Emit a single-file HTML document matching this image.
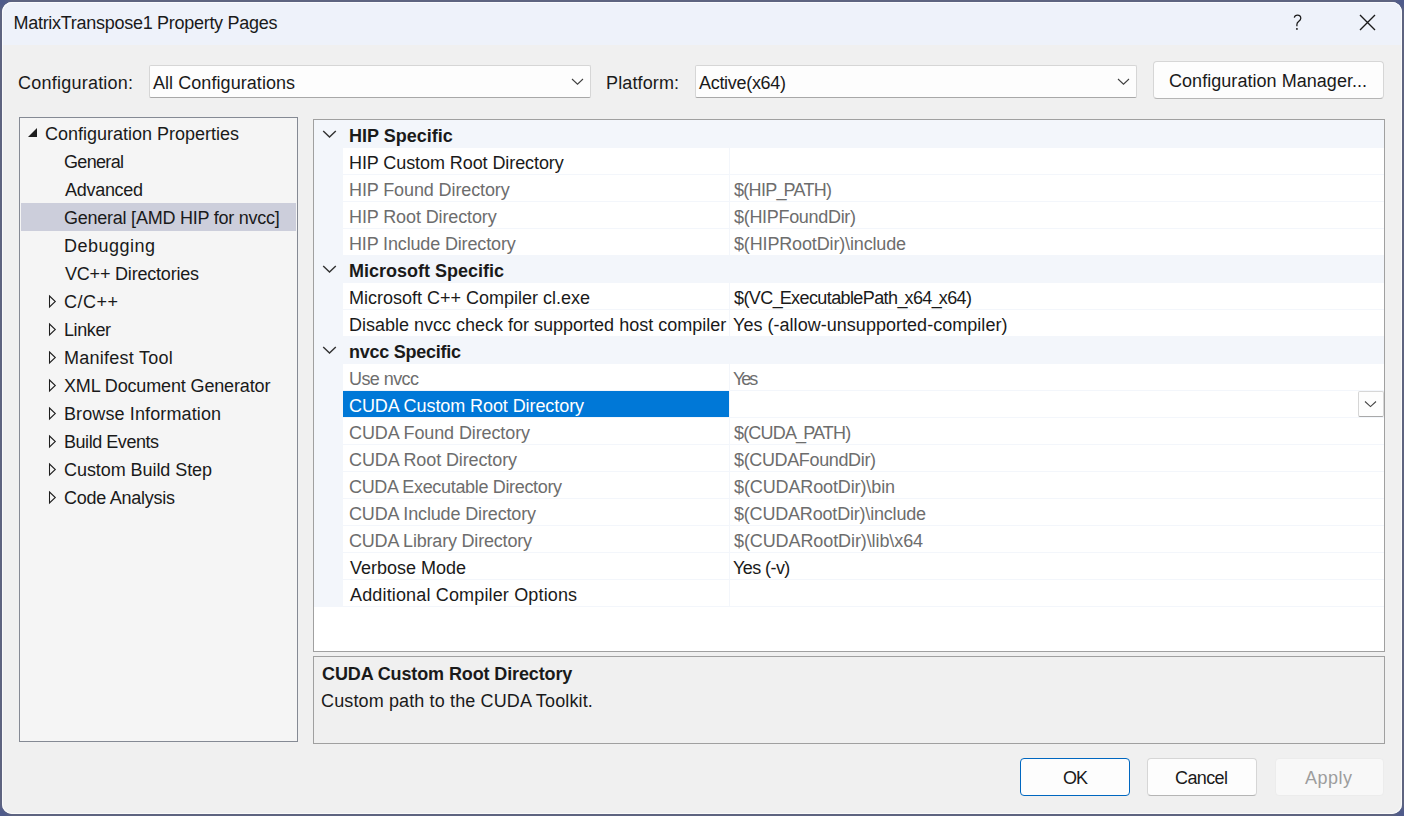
<!DOCTYPE html>
<html><head><meta charset="utf-8">
<style>
*{margin:0;padding:0;box-sizing:border-box}
html,body{width:1404px;height:816px;overflow:hidden;background:#5e6480}
body{background:radial-gradient(circle at 0 0,#4f5b8b 0,#4f5b8b 4px,rgba(79,91,139,0) 13px),radial-gradient(circle at 100% 0,#4f5b8b 0,#4f5b8b 4px,rgba(79,91,139,0) 13px),radial-gradient(circle at 0 100%,#4f5b8b 0,#4f5b8b 4px,rgba(79,91,139,0) 13px),radial-gradient(circle at 100% 100%,#4f5b8b 0,#4f5b8b 4px,rgba(79,91,139,0) 13px),#5e6480}
body{position:relative;font-family:"Liberation Sans",sans-serif;font-size:18px;color:#1a1a1a}
.win{position:absolute;left:2px;top:2px;width:1400px;height:812px;border-radius:10px;background:#f0f0f0;overflow:hidden;box-shadow:inset 0 0 0 1px #fafafa}
.tb{position:absolute;left:0;top:0;width:1400px;height:43px;background:#eef2fa;border-radius:10px 10px 0 0;box-shadow:inset 1px 1px 0 #fafbfd,inset -1px 0 0 #fafbfd}
.t{position:absolute;white-space:pre;line-height:20px;height:20px}
.b{font-weight:bold}
.combo{position:absolute;background:#fdfdfd;border:1px solid #d6d6d6;border-bottom-color:#a8a8a8;border-radius:2px}
.btn{position:absolute;background:#fdfdfd;border:1px solid #d6d6d6;border-bottom-color:#b5b5b5;border-radius:4px}
.tree{position:absolute;left:19px;top:117px;width:279px;height:625px;border:1px solid #858a94;background:#f5f5f5}
.grid{position:absolute;left:313px;top:119px;width:1072px;height:533px;border:1px solid #a0a0a0;background:#ffffff}
.desc{position:absolute;left:313px;top:656px;width:1072px;height:88px;border:1px solid #a0a0a0;background:#f0f0f0}
.rows{position:absolute;left:314px;top:120px;width:1070px;height:487px;background:#f3f6fb}
.cell{position:absolute;background:#fff;height:26px}
</style></head><body>
<div class="win">
  <div class="tb"></div>
</div>
<svg style="position:absolute;left:1290px;top:12px" width="16" height="22" viewBox="0 0 16 22"><path d="M4.3 5.7 C4.6 3.9 5.9 3 7.5 3 C9.4 3 10.8 4.2 10.8 6.2 C10.8 7.8 9.8 8.6 8.6 9.5 C7.5 10.3 6.9 11 6.9 12.4 L6.9 14.2" fill="none" stroke="#1a1a1a" stroke-width="1.25"/><circle cx="6.9" cy="16.9" r="0.95" fill="#1a1a1a"/></svg>
<svg style="position:absolute;left:1358px;top:13px" width="19" height="19" viewBox="0 0 19 19"><path d="M2 2 L17 17 M17 2 L2 17" stroke="#1a1a1a" stroke-width="1.4" fill="none"/></svg>

<div class="combo" style="left:149px;top:65px;width:442px;height:33px"></div>
<svg style="position:absolute;left:571px;top:77px" width="13" height="9" viewBox="0 0 13 9"><path d="M1 2 L6.5 7.2 L12 2" fill="none" stroke="#404040" stroke-width="1.1"/></svg>
<div class="combo" style="left:695px;top:65px;width:442px;height:33px"></div>
<svg style="position:absolute;left:1117px;top:77px" width="13" height="9" viewBox="0 0 13 9"><path d="M1 2 L6.5 7.2 L12 2" fill="none" stroke="#404040" stroke-width="1.1"/></svg>
<div class="btn" style="left:1153px;top:61px;width:231px;height:38px"></div>

<div class="tree"></div>
<div style="position:absolute;left:21px;top:203px;width:275px;height:28px;background:#cccedb"></div>
<svg style="position:absolute;left:28px;top:128px" width="9" height="9" viewBox="0 0 9 9"><path d="M9 0 L9 9 L0 9 Z" fill="#1e1e1e"/></svg>
<svg style="position:absolute;left:48px;top:294px" width="10" height="226" viewBox="0 0 10 226">
<g fill="none" stroke="#1e1e1e" stroke-width="1.05" stroke-linejoin="miter">
<path d="M1.5 2 L7.3 7.5 L1.5 13 Z"/>
<path d="M1.5 30 L7.3 35.5 L1.5 41 Z"/>
<path d="M1.5 58 L7.3 63.5 L1.5 69 Z"/>
<path d="M1.5 86 L7.3 91.5 L1.5 97 Z"/>
<path d="M1.5 114 L7.3 119.5 L1.5 125 Z"/>
<path d="M1.5 142 L7.3 147.5 L1.5 153 Z"/>
<path d="M1.5 170 L7.3 175.5 L1.5 181 Z"/>
<path d="M1.5 198 L7.3 203.5 L1.5 209 Z"/>
</g></svg>

<div class="grid"></div>
<div class="rows"></div>
<svg style="position:absolute;left:322px;top:130px" width="15" height="9" viewBox="0 0 15 9"><path d="M1.2 1 L7.5 7 L13.8 1" fill="none" stroke="#333" stroke-width="1.45"/></svg>
<div class="cell" style="left:343px;top:148px;width:386px;background:#fff"></div>
<div class="cell" style="left:730px;top:148px;width:654px"></div>
<div class="cell" style="left:343px;top:175px;width:386px;background:#fff"></div>
<div class="cell" style="left:730px;top:175px;width:654px"></div>
<div class="cell" style="left:343px;top:202px;width:386px;background:#fff"></div>
<div class="cell" style="left:730px;top:202px;width:654px"></div>
<div class="cell" style="left:343px;top:229px;width:386px;background:#fff"></div>
<div class="cell" style="left:730px;top:229px;width:654px"></div>
<svg style="position:absolute;left:322px;top:265px" width="15" height="9" viewBox="0 0 15 9"><path d="M1.2 1 L7.5 7 L13.8 1" fill="none" stroke="#333" stroke-width="1.45"/></svg>
<div class="cell" style="left:343px;top:283px;width:386px;background:#fff"></div>
<div class="cell" style="left:730px;top:283px;width:654px"></div>
<div class="cell" style="left:343px;top:310px;width:386px;background:#fff"></div>
<div class="cell" style="left:730px;top:310px;width:654px"></div>
<svg style="position:absolute;left:322px;top:346px" width="15" height="9" viewBox="0 0 15 9"><path d="M1.2 1 L7.5 7 L13.8 1" fill="none" stroke="#333" stroke-width="1.45"/></svg>
<div class="cell" style="left:343px;top:364px;width:386px;background:#fff"></div>
<div class="cell" style="left:730px;top:364px;width:654px"></div>
<div class="cell" style="left:343px;top:391px;width:386px;background:#0078d7"></div>
<div class="cell" style="left:730px;top:391px;width:654px"></div>
<div class="combo" style="left:1358px;top:391px;width:26px;height:26px;border-radius:2px"></div>
<svg style="position:absolute;left:1364px;top:400px" width="13" height="8" viewBox="0 0 13 8"><path d="M1 1.5 L6.5 6.6 L12 1.5" fill="none" stroke="#444" stroke-width="1.1"/></svg>
<div class="cell" style="left:343px;top:418px;width:386px;background:#fff"></div>
<div class="cell" style="left:730px;top:418px;width:654px"></div>
<div class="cell" style="left:343px;top:445px;width:386px;background:#fff"></div>
<div class="cell" style="left:730px;top:445px;width:654px"></div>
<div class="cell" style="left:343px;top:472px;width:386px;background:#fff"></div>
<div class="cell" style="left:730px;top:472px;width:654px"></div>
<div class="cell" style="left:343px;top:499px;width:386px;background:#fff"></div>
<div class="cell" style="left:730px;top:499px;width:654px"></div>
<div class="cell" style="left:343px;top:526px;width:386px;background:#fff"></div>
<div class="cell" style="left:730px;top:526px;width:654px"></div>
<div class="cell" style="left:343px;top:553px;width:386px;background:#fff"></div>
<div class="cell" style="left:730px;top:553px;width:654px"></div>
<div class="cell" style="left:343px;top:580px;width:386px;background:#fff"></div>
<div class="cell" style="left:730px;top:580px;width:654px"></div>

<div class="desc"></div>

<div class="btn" style="left:1020px;top:758px;width:110px;height:38px;border:1.5px solid #0067c0;background:#fdfdfd"></div>
<div class="btn" style="left:1147px;top:758px;width:110px;height:38px"></div>
<div class="btn" style="left:1275px;top:758px;width:109px;height:38px;background:#f8f8f8;border-color:#ececec"></div>
<div class="t" style="left:13.5px;top:13px;letter-spacing:-0.283px">MatrixTranspose1 Property Pages</div>
<div class="t" style="left:18px;top:73px;letter-spacing:0.231px">Configuration:</div>
<div class="t" style="left:153px;top:73px;letter-spacing:0.059px">All Configurations</div>
<div class="t" style="left:606px;top:73px;letter-spacing:0.125px">Platform:</div>
<div class="t" style="left:699px;top:73px;letter-spacing:-0.3px">Active(x64)</div>
<div class="t" style="left:1169px;top:71px;letter-spacing:0.043px">Configuration Manager...</div>
<div class="t" style="left:45px;top:124px">Configuration Properties</div>
<div class="t" style="left:64px;top:152px;letter-spacing:-0.667px">General</div>
<div class="t" style="left:65px;top:180px;letter-spacing:-0.286px">Advanced</div>
<div class="t" style="left:64px;top:208px;letter-spacing:-0.24px">General [AMD HIP for nvcc]</div>
<div class="t" style="left:64px;top:236px;letter-spacing:0.5px">Debugging</div>
<div class="t" style="left:65px;top:264px;letter-spacing:-0.2px">VC++ Directories</div>
<div class="t" style="left:64px;top:292px;letter-spacing:0.5px">C/C++</div>
<div class="t" style="left:64px;top:320px;letter-spacing:-0.4px">Linker</div>
<div class="t" style="left:64px;top:348px;letter-spacing:0.25px">Manifest Tool</div>
<div class="t" style="left:64px;top:376px;letter-spacing:-0.143px">XML Document Generator</div>
<div class="t" style="left:64px;top:404px;letter-spacing:0.118px">Browse Information</div>
<div class="t" style="left:64px;top:432px;letter-spacing:-0.455px">Build Events</div>
<div class="t" style="left:64px;top:460px;letter-spacing:-0.062px">Custom Build Step</div>
<div class="t" style="left:64px;top:488px;letter-spacing:-0.25px">Code Analysis</div>
<div class="t b" style="left:349px;top:126px">HIP Specific</div>
<div class="t" style="left:349px;top:153px;letter-spacing:-0.083px">HIP Custom Root Directory</div>
<div class="t" style="left:349px;top:180px;letter-spacing:-0.111px;color:#6d6d6d">HIP Found Directory</div>
<div class="t" style="left:734px;top:180px;letter-spacing:-0.7px;color:#6d6d6d">$(HIP<span style="letter-spacing:-3px">_</span>PATH)</div>
<div class="t" style="left:349px;top:207px;letter-spacing:-0.118px;color:#6d6d6d">HIP Root Directory</div>
<div class="t" style="left:734px;top:207px;letter-spacing:-0.308px;color:#6d6d6d">$(HIPFoundDir)</div>
<div class="t" style="left:349px;top:234px;letter-spacing:-0.15px;color:#6d6d6d">HIP Include Directory</div>
<div class="t" style="left:734px;top:234px;letter-spacing:-0.15px;color:#6d6d6d">$(HIPRootDir)\include</div>
<div class="t b" style="left:349px;top:261px">Microsoft Specific</div>
<div class="t" style="left:349px;top:288px">Microsoft C++ Compiler cl.exe</div>
<div class="t" style="left:734px;top:288px;letter-spacing:-0.593px">$(VC<span style="letter-spacing:-3px">_</span>ExecutablePath<span style="letter-spacing:-3px">_</span>x64<span style="letter-spacing:-3px">_</span>x64)</div>
<div class="t" style="left:349px;top:315px">Disable nvcc check for supported host compiler</div>
<div class="t" style="left:733px;top:315px;letter-spacing:0.031px">Yes (-allow-unsupported-compiler)</div>
<div class="t b" style="left:349px;top:342px;letter-spacing:-0.25px">nvcc Specific</div>
<div class="t" style="left:349px;top:369px;letter-spacing:-0.571px;color:#6d6d6d">Use nvcc</div>
<div class="t" style="left:733px;top:369px;letter-spacing:-2.0px;color:#6d6d6d">Yes</div>
<div class="t" style="left:349px;top:396px;letter-spacing:-0.08px;color:#fff">CUDA Custom Root Directory</div>
<div class="t" style="left:349px;top:423px;letter-spacing:-0.105px;color:#6d6d6d">CUDA Found Directory</div>
<div class="t" style="left:734px;top:423px;letter-spacing:-0.818px;color:#6d6d6d">$(CUDA<span style="letter-spacing:-3px">_</span>PATH)</div>
<div class="t" style="left:349px;top:450px;letter-spacing:-0.111px;color:#6d6d6d">CUDA Root Directory</div>
<div class="t" style="left:734px;top:450px;letter-spacing:-0.357px;color:#6d6d6d">$(CUDAFoundDir)</div>
<div class="t" style="left:349px;top:477px;letter-spacing:-0.333px;color:#6d6d6d">CUDA Executable Directory</div>
<div class="t" style="left:734px;top:477px;letter-spacing:-0.118px;color:#6d6d6d">$(CUDARootDir)\bin</div>
<div class="t" style="left:349px;top:504px;letter-spacing:-0.143px;color:#6d6d6d">CUDA Include Directory</div>
<div class="t" style="left:734px;top:504px;letter-spacing:-0.19px;color:#6d6d6d">$(CUDARootDir)\include</div>
<div class="t" style="left:349px;top:531px;letter-spacing:-0.19px;color:#6d6d6d">CUDA Library Directory</div>
<div class="t" style="left:734px;top:531px;letter-spacing:-0.095px;color:#6d6d6d">$(CUDARootDir)\lib\x64</div>
<div class="t" style="left:350px;top:558px">Verbose Mode</div>
<div class="t" style="left:733px;top:558px;letter-spacing:-0.571px">Yes (-v)</div>
<div class="t" style="left:350px;top:585px;letter-spacing:0.154px">Additional Compiler Options</div>
<div class="t b" style="left:322px;top:664px;letter-spacing:-0.12px">CUDA Custom Root Directory</div>
<div class="t" style="left:321px;top:691px;letter-spacing:0.129px">Custom path to the CUDA Toolkit.</div>
<div class="t" style="left:1063px;top:768px;letter-spacing:-1.0px">OK</div>
<div class="t" style="left:1175px;top:768px;letter-spacing:-0.6px">Cancel</div>
<div class="t" style="left:1305px;top:768px;letter-spacing:0.5px;color:#9d9d9d">Apply</div>
</body></html>
